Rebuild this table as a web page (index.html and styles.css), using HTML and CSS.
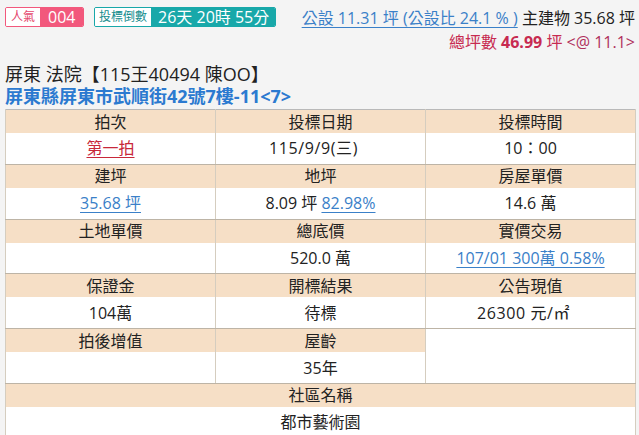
FILE: index.html
```html
<!DOCTYPE html>
<html lang="zh-Hant">
<head>
<meta charset="utf-8">
<link rel="stylesheet" href="styles.css">
</head>
<body>
<div class="top">
  <div class="badges">
    <span class="badge pink"><span class="lbl">人氣</span><span class="val">004</span></span>
    <span class="badge teal"><span class="lbl">投標倒數</span><span class="val">26天 20時 55分</span></span>
  </div>
  <div class="area">
    <div class="line1"><a class="link" href="#">公設 11.31 坪 (公設比 24.1 % )</a> 主建物 35.68 坪</div>
    <div class="line2">總坪數 <b>46.99</b> 坪 <span class="unit">&lt;@ 11.1&gt;</span></div>
  </div>
</div>
<div class="title">屏東 法院【115王40494 陳OO】</div>
<div class="addr">屏東縣屏東市武順街42號7樓-11&lt;7&gt;</div>
<table class="info">
  <tr class="h"><th>拍次</th><th>投標日期</th><th>投標時間</th></tr>
  <tr class="d"><td><a class="red" href="#">第一拍</a></td><td class="wide">115/9/9(三)</td><td>10：00</td></tr>
  <tr class="h"><th>建坪</th><th>地坪</th><th>房屋單價</th></tr>
  <tr class="d"><td><a class="link" href="#">35.68 坪</a></td><td>8.09 坪 <a class="link" href="#">82.98%</a></td><td>14.6 萬</td></tr>
  <tr class="h"><th>土地單價</th><th>總底價</th><th>實價交易</th></tr>
  <tr class="d"><td></td><td>520.0 萬</td><td><a class="link" href="#">107/01 300萬 0.58%</a></td></tr>
  <tr class="h"><th>保證金</th><th>開標結果</th><th>公告現值</th></tr>
  <tr class="d"><td>104萬</td><td>待標</td><td class="wide">26300 元/㎡</td></tr>
  <tr class="h"><th>拍後增值</th><th>屋齡</th><td class="blank" rowspan="2"></td></tr>
  <tr class="d"><td></td><td>35年</td></tr>
  <tr class="h"><th colspan="3">社區名稱</th></tr>
  <tr class="d"><td colspan="3">都市藝術園</td></tr>
</table>
</body>
</html>
```
FILE: styles.css
```css
html, body {
  margin: 0;
  padding: 0;
  background: #f4f4f4;
}
body {
  padding: 7px 4px 0 5px;
  font-family: "Open Sans", "Noto Sans CJK TC", sans-serif;
  color: #222;
  font-size: 16px;
  overflow: hidden;
  height: 435px;
  box-sizing: border-box;
}
.top {
  display: flex;
  justify-content: space-between;
  align-items: flex-start;
}
.badges {
  display: flex;
  gap: 10px;
}
.badge {
  display: inline-flex;
  align-items: stretch;
  height: 20px;
  border-radius: 2px;
  overflow: hidden;
  box-sizing: border-box;
  line-height: 18px;
  white-space: nowrap;
}
.badge .lbl {
  background: #fff;
  font-size: 12px;
  display: flex;
  align-items: center;
}
.badge .val {
  color: #fff;
  display: flex;
  align-items: center;
}
.pink { border: 1px solid #f2587c; }
.pink .lbl { color: #e5486e; padding: 0 5px 0 5px; }
.pink .val { background: #f2587c; font-size: 16px; width: 43px; padding: 0 0 0 8px; box-sizing: border-box; }
.teal { border: 1px solid #18a8a9; }
.teal .lbl { color: #138c8d; font-size: 12px; padding: 0 4px 0 4px; }
.teal .val { background: #18a8a9; font-size: 16px; padding: 0 6px 0 7px; }
.area {
  text-align: right;
  font-size: 16px;
  margin-top: 1px;
}
.line1 { line-height: 20px; }
.line2 {
  color: #c72a50;
  line-height: 20px;
  margin-top: 4px;
}
.line2 b { font-weight: 700; }
.line2 .unit { color: #b0305c; }
a.link {
  color: #3a80c8;
  text-decoration: underline;
  text-underline-offset: 3px;
}
.title {
  margin-top: 11px;
  font-size: 18px;
  line-height: 22px;
  color: #222;
}
.addr {
  font-size: 18px;
  font-weight: 700;
  color: #2b7ad0;
  line-height: 22px;
  margin-bottom: 2px;
}
.info {
  width: 631px;
  border-collapse: collapse;
  table-layout: fixed;
  border: 1px solid #b9b9b9;
  background: #fff;
}
.info th, .info td {
  text-align: center;
  font-weight: 400;
  padding: 0;
  line-height: 20px;
  border-left: 1px solid #d5cdbf;
  border-right: 1px solid #d5cdbf;
}
.info td.wide { letter-spacing: 0.6px; padding-right: 14px; }
.info tr.h th, .info tr.h td { height: 23px; }
.info tr.h th { background: #f6dfc6; }
.info tr.d td { height: 30.8px; border-bottom: 1px solid #bdb4a6; }
.info td.blank { border-bottom: 1px solid #bdb4a6; background: #fff; }
a.red {
  color: #c8283a;
  text-decoration: underline;
  text-underline-offset: 3px;
}
```
